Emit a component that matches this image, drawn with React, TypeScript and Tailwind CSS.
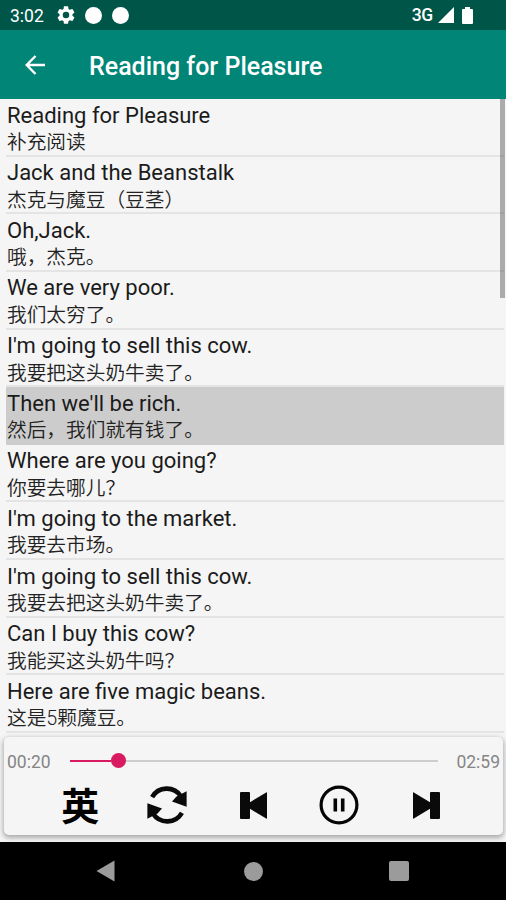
const lines = [
  { en: 'Reading for Pleasure', zh: '补充阅读' },
  { en: 'Jack and the Beanstalk', zh: '杰克与魔豆（豆茎）' },
  { en: 'Oh,Jack.', zh: '哦，杰克。' },
  { en: 'We are very poor.', zh: '我们太穷了。' },
  { en: "I'm going to sell this cow.", zh: '我要把这头奶牛卖了。' },
  { en: "Then we'll be rich.", zh: '然后，我们就有钱了。' },
  { en: 'Where are you going?', zh: '你要去哪儿？' },
  { en: "I'm going to the market.", zh: '我要去市场。' },
  { en: "I'm going to sell this cow.", zh: '我要去把这头奶牛卖了。' },
  { en: 'Can I buy this cow?', zh: '我能买这头奶牛吗？' },
  { en: 'Here are five magic beans.', zh: '这是5颗魔豆。' },
]

const activeLine = 5

function StatusBar() {
  return (
    <div className="flex h-[30px] shrink-0 items-center bg-[#005549] pl-[10px] pr-[33px] text-white">
      <span className="w-[47px] pt-[2px] text-[17.5px] leading-[30px]">3:02</span>
      <svg className="h-[18px] w-[18px]" viewBox="2 2 20 20" fill="currentColor">
        <path d="M19.14 12.94c.04-.3.06-.61.06-.94 0-.32-.02-.64-.07-.94l2.03-1.58a.49.49 0 0 0 .12-.61l-1.92-3.32a.49.49 0 0 0-.59-.22l-2.39.96c-.5-.38-1.03-.7-1.62-.94l-.36-2.54a.48.48 0 0 0-.48-.41h-3.84c-.24 0-.43.17-.47.41l-.36 2.54c-.59.24-1.13.57-1.62.94l-2.39-.96a.48.48 0 0 0-.59.22L2.74 8.87c-.12.21-.08.47.12.61l2.03 1.58c-.05.3-.09.63-.09.94s.02.64.07.94l-2.03 1.58a.49.49 0 0 0-.12.61l1.92 3.32c.12.22.37.29.59.22l2.39-.96c.5.38 1.03.7 1.62.94l.36 2.54c.05.24.24.41.48.41h3.84c.24 0 .44-.17.47-.41l.36-2.54c.59-.24 1.13-.56 1.62-.94l2.39.96c.22.08.47 0 .59-.22l1.92-3.32a.48.48 0 0 0-.12-.61l-2.01-1.58zM12 15.6a3.6 3.6 0 1 1 0-7.2 3.6 3.6 0 0 1 0 7.2z" />
      </svg>
      <span className="ml-[10px] h-[17px] w-[17px] rounded-full bg-white" />
      <span className="ml-[10px] h-[17px] w-[17px] rounded-full bg-white" />
      <span className="ml-auto text-[17.5px] font-medium leading-[30px] tracking-[-0.3px]">3G</span>
      <svg className="ml-[5px] h-[16px] w-[16px]" viewBox="0 0 16 16" fill="currentColor">
        <path d="M0 16L16 0v16z" />
      </svg>
      <svg className="ml-[8px] h-[17px] w-[11px]" viewBox="0 0 11 17" fill="currentColor">
        <path d="M3 0h5v2h2q1 0 1 1v13q0 1-1 1H1q-1 0-1-1V3q0-1 1-1h2z" />
      </svg>
    </div>
  )
}

function TitleBar() {
  return (
    <header className="flex h-[69px] shrink-0 items-center bg-[#008577] pl-[25px] text-white">
      <svg className="h-[20px] w-[20px]" viewBox="0 0 20 20" fill="none" stroke="currentColor" strokeWidth="2.4">
        <path d="M20 10H2M10.5 1L1.7 10l8.8 9" />
      </svg>
      <h1 className="ml-[44px] pt-[4px] text-[25px] font-medium leading-[30px]">Reading for Pleasure</h1>
    </header>
  )
}

function SkipIcon({ className }: { className?: string }) {
  return (
    <svg className={className} viewBox="0 0 27 27" fill="#0a0a0a">
      <path d="M0 .6Q0-.2.8.4L17 10.2V1q0-1 1-1h8q1 0 1 1v25q0 1-1 1h-8q-1 0-1-1v-9.2L.8 26.6q-.8.6-.8-.2z" />
    </svg>
  )
}

function RepeatIcon() {
  return (
    <svg className="h-[40px] w-[40px]" viewBox="-20 -20 40 40">
      <g id="repeat-half">
        <path d="M-14.9-7.9A16.9 16.9 0 0 1 13.9-8.8" fill="none" stroke="#0a0a0a" strokeWidth="4.6" />
        <path d="M19.6-13.8V1.8L5-3.6l4.5-5z" fill="#0a0a0a" />
      </g>
      <use href="#repeat-half" transform="rotate(180)" />
    </svg>
  )
}

function Player() {
  return (
    <section className="ml-[4px] mr-[3px] mt-[4px] h-[98px] shrink-0 rounded-[5px] bg-[#f5f5f5] shadow-[0_2px_5px_1px_rgba(0,0,0,0.3)]">
      <div className="flex h-[47px] items-center px-[3px] text-[17.5px] text-[#858585]">
        <span className="w-[63px] pt-[3px]">00:20</span>
        <div className="flex h-[16px] w-[368px] items-center">
          <div className="h-[2px] w-[41px] bg-[#d81b60]" />
          <div className="h-[15px] w-[15px] rounded-full bg-[#d81b60]" />
          <div className="h-[2px] flex-1 bg-[#cdcdcd]" />
        </div>
        <span className="ml-auto pt-[3px]">02:59</span>
      </div>
      <div className="ml-[33px] grid h-[42px] w-[432px] grid-cols-5 place-items-center">
        <span className="pb-[3px] font-['Noto_Sans_CJK_SC',sans-serif] text-[38px] font-bold leading-[39px] text-black">英</span>
        <RepeatIcon />
        <SkipIcon className="ml-[2px] h-[27px] w-[27px] rotate-180" />
        <svg className="h-[40px] w-[40px]" viewBox="-20 -20 40 40" fill="none" stroke="#050505" strokeWidth="3.2">
          <circle r="17.9" />
          <path d="M-3.7-6.5v13M3.7-6.5v13" strokeWidth="3.6" />
        </svg>
        <SkipIcon className="ml-[2px] h-[27px] w-[27px]" />
      </div>
    </section>
  )
}

function NavBar() {
  return (
    <nav className="relative mt-auto flex h-[58px] shrink-0 items-center bg-black pl-[96px] pr-[97px] text-[#9b9b9b]">
      <svg className="h-[22px] w-[19px]" viewBox="0 0 19 22" fill="currentColor">
        <path d="M18.5.5v21L.5 11z" />
      </svg>
      <span className="ml-[129px] h-[19px] w-[19px] rounded-full bg-current" />
      <span className="ml-auto h-[20px] w-[20px] rounded-[2px] bg-current" />
    </nav>
  )
}

export default function App() {
  return (
    <div className="flex h-[900px] w-[506px] flex-col overflow-hidden bg-[#f5f5f5] font-[Roboto,'Noto_Sans_CJK_SC',sans-serif]">
      <StatusBar />
      <TitleBar />
      <main className="relative shrink-0 pl-[6px] pr-[2px]">
        <ul>
          {lines.map((line, i) => (
            <li
              key={i}
              className={
                i === activeLine
                  ? 'h-[57.65px] border-b-2 border-[#cccccc] bg-[#cccccc] pl-px'
                  : 'h-[57.65px] border-b-2 border-[#e4e4e4] pl-px'
              }
            >
              <p className="h-[30px] pt-[1.5px] text-[22px] leading-[30px] text-[#1b1b1b]">{line.en}</p>
              <p className="text-[19.7px] font-[350] leading-[28px] text-[#222222]">{line.zh}</p>
            </li>
          ))}
        </ul>
        {/* scroll thumb */}
        <div className="absolute right-px top-0 h-[199px] w-[5px] bg-black/30" />
      </main>
      <Player />
      <NavBar />
    </div>
  )
}
